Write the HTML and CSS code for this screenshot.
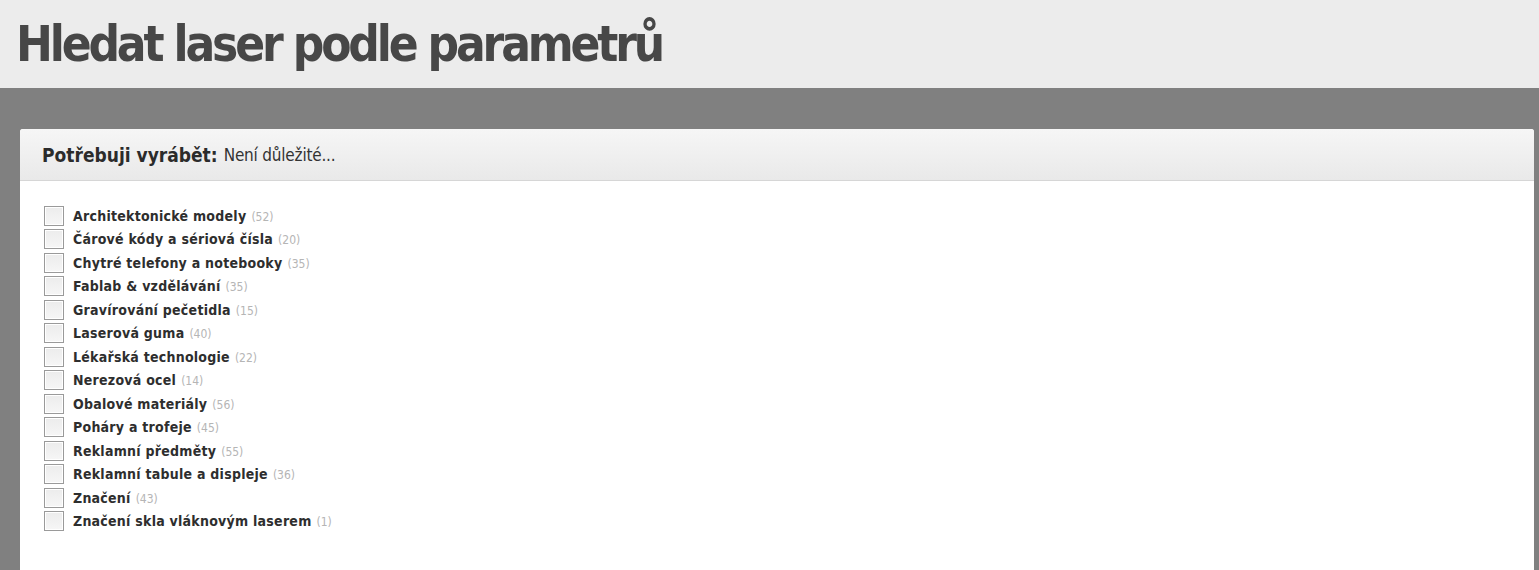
FILE: index.html
```html
<!DOCTYPE html>
<html lang="cs">
<head>
<meta charset="utf-8">
<title>Hledat laser podle parametrů</title>
<link rel="stylesheet" href="styles.css">
</head>
<body>
<header class="top">
  <h1 class="title">Hledat laser podle parametrů</h1>
</header>
<main class="stage">
  <section class="panel">
    <div class="panel-head">
      <span class="panel-label">Potřebuji vyrábět:</span>
      <span class="panel-value">Není důležité...</span>
    </div>
    <ul class="options">
      <li class="opt"><span class="box"></span><span class="name">Architektonické modely</span><span class="count">(52)</span></li>
      <li class="opt"><span class="box"></span><span class="name">Čárové kódy a sériová čísla</span><span class="count">(20)</span></li>
      <li class="opt"><span class="box"></span><span class="name">Chytré telefony a notebooky</span><span class="count">(35)</span></li>
      <li class="opt"><span class="box"></span><span class="name">Fablab &amp; vzdělávání</span><span class="count">(35)</span></li>
      <li class="opt"><span class="box"></span><span class="name">Gravírování pečetidla</span><span class="count">(15)</span></li>
      <li class="opt"><span class="box"></span><span class="name">Laserová guma</span><span class="count">(40)</span></li>
      <li class="opt"><span class="box"></span><span class="name">Lékařská technologie</span><span class="count">(22)</span></li>
      <li class="opt"><span class="box"></span><span class="name">Nerezová ocel</span><span class="count">(14)</span></li>
      <li class="opt"><span class="box"></span><span class="name">Obalové materiály</span><span class="count">(56)</span></li>
      <li class="opt"><span class="box"></span><span class="name">Poháry a trofeje</span><span class="count">(45)</span></li>
      <li class="opt"><span class="box"></span><span class="name">Reklamní předměty</span><span class="count">(55)</span></li>
      <li class="opt"><span class="box"></span><span class="name">Reklamní tabule a displeje</span><span class="count">(36)</span></li>
      <li class="opt"><span class="box"></span><span class="name">Značení</span><span class="count">(43)</span></li>
      <li class="opt"><span class="box"></span><span class="name">Značení skla vláknovým laserem</span><span class="count">(1)</span></li>
    </ul>
  </section>
</main>
</body>
</html>
```

FILE: styles.css
```css
html, body {
  margin: 0;
  padding: 0;
  height: 100%;
}
body {
  background: #808080;
  font-family: "DejaVu Sans Condensed", "DejaVu Sans", sans-serif;
  overflow: hidden;
}
.top {
  background: #ececec;
  height: 88px;
  box-sizing: border-box;
  padding: 14px 0 0 16px;
}
.title {
  margin: 0;
  font-size: 49px;
  font-weight: bold;
  color: #474747;
  letter-spacing: -3.15px;
  line-height: 62px;
}
.stage {
  padding: 41px 5px 0 20px;
}
.panel {
  background: #fff;
  height: 460px;
  border-radius: 3px 3px 0 0;
}
.panel-head {
  height: 52px;
  box-sizing: border-box;
  padding: 0 22px;
  display: flex;
  align-items: center;
  gap: 6px;
  background: linear-gradient(#f6f6f6, #e9e9e9);
  border-bottom: 1px solid #d6d6d6;
  border-radius: 3px 3px 0 0;
}
.panel-label {
  font-size: 19px;
  font-weight: bold;
  color: #2b2b2b;
}
.panel-value {
  font-size: 17px;
  color: #333;
  letter-spacing: -0.2px;
}
.options {
  list-style: none;
  margin: 0;
  padding: 23px 0 0 24px;
}
.opt {
  display: flex;
  align-items: center;
  height: 23.5px;
}
.box {
  width: 18px;
  height: 18px;
  border: 1px solid #9a9a9a;
  background: linear-gradient(#ececec, #f6f6f6);
  box-shadow: inset 0 0 0 1px #fff;
  margin-right: 9px;
  flex: none;
}
.name {
  font-size: 14px;
  font-weight: bold;
  color: #2e2e2e;
  letter-spacing: 0.25px;
}
.count {
  font-size: 12px;
  color: #b5b5b5;
  margin-left: 5px;
  margin-top: 2px;
}
```
